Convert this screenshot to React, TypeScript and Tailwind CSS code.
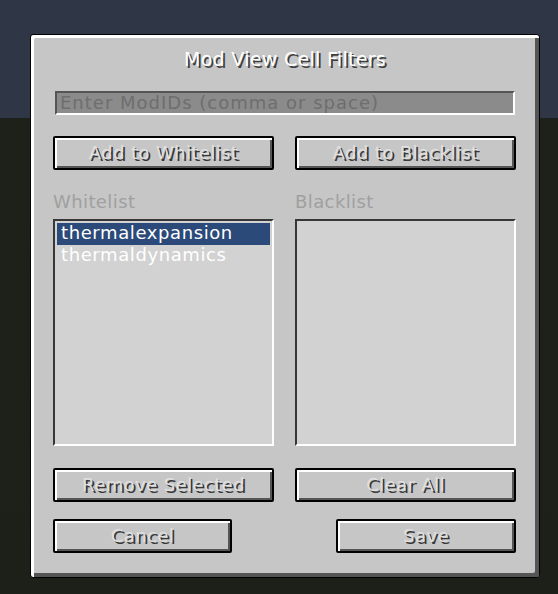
const font = { fontFamily: '"DejaVu Sans", "Liberation Sans", sans-serif' };

const McButton = ({ label, className }: { label: string; className: string }) => (
  <button
    className={`h-[34px] rounded-[2px] border-2 border-black bg-[#c6c6c6] shadow-[inset_2px_2px_0_#ffffff,inset_-2px_-2px_0_#555555] text-[18px] leading-[20px] tracking-[0.4px] text-[#e0e0e0] [text-shadow:2px_2px_0_#383838] ${className}`}
  >
    {label}
  </button>
);

const ListBox = ({ items, selected }: { items: string[]; selected?: number }) => (
  <div className="h-[227px] w-[221px] border-2 border-t-[#373737] border-l-[#373737] border-b-white border-r-white bg-[#d2d2d2] p-[2px]">
    {items.map((item, i) => (
      <div
        key={item}
        className={`h-[22px] pl-[4px] text-[18px] leading-[19px] tracking-[0.6px] text-white ${
          i === selected ? "bg-[#2b4a79]" : ""
        }`}
      >
        {item}
      </div>
    ))}
  </div>
);

export default function App() {
  return (
    <div
      className="h-[594px] w-[558px] overflow-hidden bg-[linear-gradient(to_bottom,#2f3747_0px,#2f3747_118px,#1e2119_118px,#1c2018_100%)] pl-[30px] pt-[34px]"
      style={font}
    >
      <div className="flex h-[544px] w-[510px] flex-col rounded-[3px] border border-black bg-[#c6c6c6] px-[22px] pt-[14px] shadow-[inset_3px_3px_0_#ffffff,inset_-4px_-4px_0_#555555]">
        <div className="h-[20px] text-center text-[19px] leading-[20px] tracking-[0.3px] text-white [text-shadow:2px_2px_0_#3f3f3f]">
          Mod View Cell Filters
        </div>

        <div className="mx-[2px] mt-[22px] h-[24px] w-[460px] overflow-hidden whitespace-nowrap border-2 border-t-[#555555] border-l-[#555555] border-b-white border-r-white bg-[#8b8b8b] pl-[3px] text-[18px] leading-[20px] tracking-[1px] text-[#6e6e6e]">
          Enter ModIDs (comma or space)
        </div>

        <div className="mt-[21px] flex gap-[21px]">
          <McButton label="Add to Whitelist" className="w-[221px]" />
          <McButton label="Add to Blacklist" className="w-[221px]" />
        </div>

        <div className="mt-[22px] flex gap-[21px]">
          <div className="flex w-[221px] flex-col">
            <div className="h-[20px] text-[18px] leading-[20px] tracking-[0.4px] text-[#a0a0a0]">Whitelist</div>
            <div className="mt-[7px]">
              <ListBox items={["thermalexpansion", "thermaldynamics"]} selected={0} />
            </div>
          </div>
          <div className="flex w-[221px] flex-col">
            <div className="h-[20px] text-[18px] leading-[20px] tracking-[0.4px] text-[#a0a0a0]">Blacklist</div>
            <div className="mt-[7px]">
              <ListBox items={[]} />
            </div>
          </div>
        </div>

        <div className="mt-[22px] flex gap-[21px]">
          <McButton label="Remove Selected" className="w-[221px]" />
          <McButton label="Clear All" className="w-[221px]" />
        </div>

        <div className="mt-[17px] flex justify-between pr-[1px]">
          <McButton label="Cancel" className="w-[179px]" />
          <McButton label="Save" className="w-[180px]" />
        </div>
      </div>
    </div>
  );
}
